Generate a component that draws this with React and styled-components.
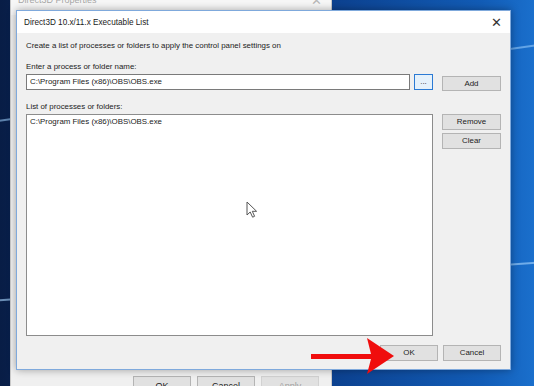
import React from 'react';
import styled, { createGlobalStyle } from 'styled-components';

const GlobalStyle = createGlobalStyle`
  html, body {
    margin: 0;
    padding: 0;
    overflow: hidden;
  }
  body {
    font-family: 'Liberation Sans', Arial, sans-serif;
  }
`;

const Desktop = styled.div`
  position: relative;
  width: 534px;
  height: 386px;
  overflow: hidden;
  background:
    linear-gradient(172deg, transparent 0 118px, rgba(160, 210, 255, 0.55) 119px 120px, transparent 121px),
    linear-gradient(176deg, transparent 0 298px, rgba(170, 215, 255, 0.6) 299px 300px, transparent 301px),
    linear-gradient(90deg, #081d46 0%, #0a2d66 20%, #0c3f8c 60%, #125cb6 90%, #1a6fcc 100%);
`;

const Window = styled.div`
  position: absolute;
  display: flex;
  flex-direction: column;
  background: #f0f0f0;
  box-sizing: border-box;
`;

const BackWindow = styled(Window)`
  left: 10px;
  top: -20px;
  width: 322px;
  height: 420px;
  border: 1px solid #c9c9c9;
`;

const Dialog = styled(Window)`
  left: 16px;
  top: 10px;
  width: 495px;
  height: 360px;
  border: 1px solid #7fa9dc;
  box-shadow: 0 0 8px rgba(0, 0, 0, 0.35);
`;

const TitleBar = styled.div`
  display: flex;
  align-items: center;
  justify-content: space-between;
  height: ${p => p.$h}px;
  flex: none;
  padding: ${p => p.$pad};
  background: ${p => (p.$inactive ? '#f7f7f7' : '#ffffff')};
  color: ${p => (p.$inactive ? '#a8a8a8' : '#1a1a1a')};
  font-size: ${p => (p.$inactive ? 9 : 8.2)}px;
`;

const Close = styled.span`
  font-size: 13px;
  line-height: 1;
  color: ${p => (p.$inactive ? '#b8b8b8' : '#333')};
`;

const Body = styled.div`
  flex: 1;
  display: flex;
  flex-direction: column;
  padding: 7px 9px 8px 9px;
  font-size: 7.9px;
  color: #222;
`;

const Text = styled.div`
  height: 11px;
  line-height: 11px;
  white-space: nowrap;
  margin-bottom: ${p => p.$mb || 0}px;
`;

const Row = styled.div`
  display: grid;
  grid-template-columns: 1fr 59px;
  column-gap: 9px;
  margin-bottom: ${p => p.$mb || 0}px;
  flex: ${p => (p.$grow ? 1 : 'none')};
`;

const InputWrap = styled.div`
  display: flex;
  gap: 4px;
`;

const Field = styled.div`
  flex: 1;
  height: 16px;
  box-sizing: border-box;
  border: 1px solid #7a7a7a;
  background: #fff;
  padding: 0 3px;
  line-height: 14px;
  white-space: nowrap;
`;

const ListBox = styled.div`
  box-sizing: border-box;
  border: 1px solid #8c8c8c;
  background: #fff;
  padding: 1px 3px;
  line-height: 11px;
`;

const SideColumn = styled.div`
  display: flex;
  flex-direction: column;
  gap: 3px;
`;

const Button = styled.div`
  box-sizing: border-box;
  width: ${p => p.$w || 59}px;
  height: ${p => p.$h || 16}px;
  margin-top: ${p => p.$mt || 0}px;
  display: flex;
  justify-content: center;
  align-items: ${p => (p.$top ? 'flex-start' : 'center')};
  padding-top: ${p => p.$pt || 0}px;
  background: ${p => (p.$focus ? '#e5f1fb' : '#e1e1e1')};
  border: 1px solid ${p => (p.$focus ? '#2b7ad4' : p.$disabled ? '#d2d2d2' : '#b4b4b4')};
  color: ${p => (p.$disabled ? '#a0a0a0' : '#222')};
  font-size: ${p => p.$fs || 7.9}px;
  line-height: 1;
`;

const Footer = styled.div`
  display: flex;
  justify-content: flex-end;
  gap: ${p => p.$gap}px;
  padding: ${p => p.$pad};
`;

const Overlay = styled.svg`
  position: absolute;
  left: ${p => p.$x}px;
  top: ${p => p.$y}px;
  pointer-events: none;
`;

export default function App() {
  return (
    <Desktop>
      <GlobalStyle />
      <BackWindow>
        <TitleBar $h={30} $pad="4px 9px 0 7px" $inactive>
          <span>Direct3D Properties</span>
          <Close $inactive>✕</Close>
        </TitleBar>
        <Body />
        <Footer $gap={6} $pad="0 12px 3px 0">
          <Button $w={58} $h={20} $top $pt={5} $fs={9}>OK</Button>
          <Button $w={58} $h={20} $top $pt={5} $fs={9}>Cancel</Button>
          <Button $w={58} $h={20} $top $pt={5} $fs={9} $disabled>Apply</Button>
        </Footer>
      </BackWindow>

      <Dialog>
        <TitleBar $h={22} $pad="0 8px 0 7px">
          <span>Direct3D 10.x/11.x Executable List</span>
          <Close>✕</Close>
        </TitleBar>
        <Body>
          <Text $mb={10}>Create a list of processes or folders to apply the control panel settings on</Text>
          <Text $mb={2}>Enter a process or folder name:</Text>
          <Row $mb={10}>
            <InputWrap>
              <Field>C:\Program Files (x86)\OBS\OBS.exe</Field>
              <Button $w={19} $focus>...</Button>
            </InputWrap>
            <Button $mt={2} $h={15}>Add</Button>
          </Row>
          <Text $mb={2}>List of processes or folders:</Text>
          <Row $grow $mb={9}>
            <ListBox>C:\Program Files (x86)\OBS\OBS.exe</ListBox>
            <SideColumn>
              <Button>Remove</Button>
              <Button>Clear</Button>
            </SideColumn>
          </Row>
          <Footer $gap={5} $pad="0">
            <Button $w={58}>OK</Button>
            <Button $w={58}>Cancel</Button>
          </Footer>
        </Body>
      </Dialog>

      <Overlay $x={246} $y={201} width="14" height="18" viewBox="0 0 14 18">
        <path d="M1 1 L1 14 L4.2 11 L6.6 16.2 L8.6 15.3 L6.3 10.3 L10.6 10.3 Z" fill="#fff" stroke="#555" strokeWidth="1" strokeLinejoin="round" />
      </Overlay>

      <Overlay $x={308} $y={334} width="90" height="44" viewBox="0 0 90 44">
        <polygon points="3,20 63,20 59,4 86,22 59,40 63,25 3,25" fill="#f00d0d" />
      </Overlay>
    </Desktop>
  );
}
